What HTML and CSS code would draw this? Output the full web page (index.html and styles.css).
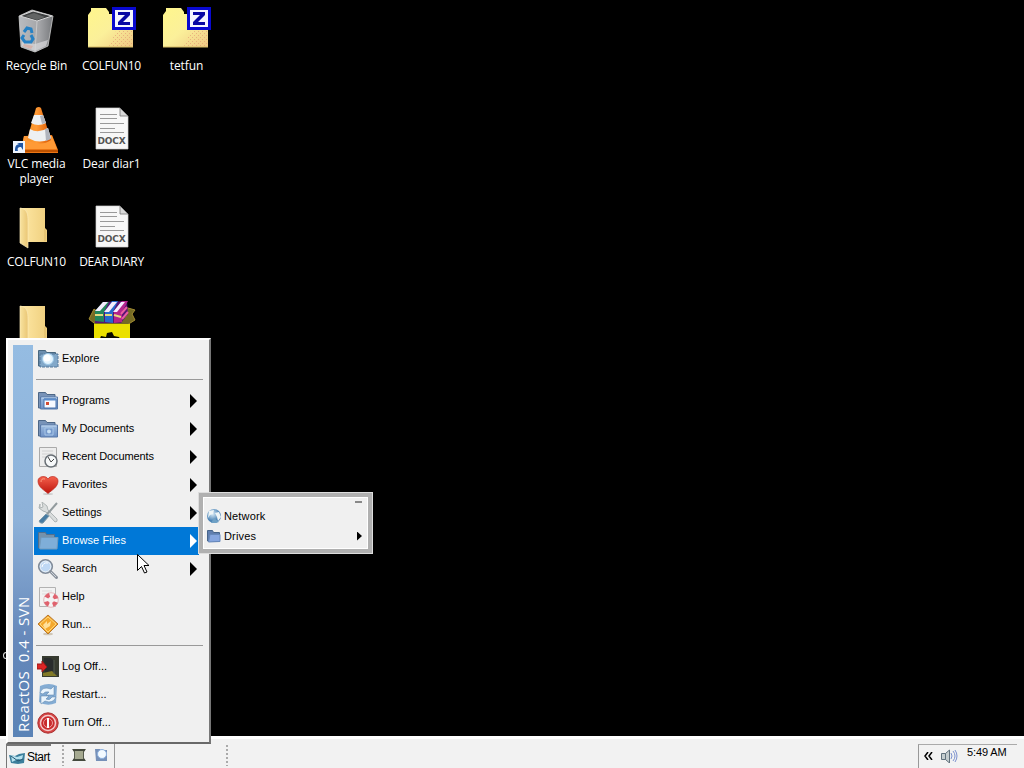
FILE: index.html
```html
<!DOCTYPE html>
<html lang="en">
<head>
<meta charset="utf-8">
<title>Desktop</title>
<link rel="stylesheet" href="styles.css">
</head>
<body>
<svg class="defs" width="0" height="0">
  <defs>
    <linearGradient id="paper" x2="1"><stop stop-color="#f8e3a0"/><stop offset="1" stop-color="#eac674"/></linearGradient>
    <linearGradient id="front" x2="1"><stop stop-color="#ffe9a6"/><stop offset="1" stop-color="#efcf7e"/></linearGradient>
    <linearGradient id="zip" x2="1" y2="1"><stop stop-color="#fff68c"/><stop offset=".5" stop-color="#fbf09a"/><stop offset="1" stop-color="#efc884"/></linearGradient>
    <linearGradient id="cone" x2="1"><stop stop-color="#f79226"/><stop offset=".4" stop-color="#ff9a35"/><stop offset="1" stop-color="#d95500"/></linearGradient>
    <linearGradient id="bin" x2="1"><stop stop-color="#b9bcc0"/><stop offset=".6" stop-color="#a4a5a8"/><stop offset="1" stop-color="#77797c"/></linearGradient>
    <linearGradient id="blue" y2="1" x2="0"><stop stop-color="#9dbce0"/><stop offset="1" stop-color="#6c8fc4"/></linearGradient>
    <linearGradient id="heart" y2="1" x2="0"><stop stop-color="#f4604c"/><stop offset="1" stop-color="#bd150d"/></linearGradient>
    <radialGradient id="globe" cx=".4" cy=".35"><stop stop-color="#d9ecf7"/><stop offset="1" stop-color="#4b83b5"/></radialGradient>
    <pattern id="grain" width="4" height="4" patternUnits="userSpaceOnUse"><path d="M0 0h1v1H0zM2 2h1v1H2z" fill="#e39a74"/></pattern>
    <symbol id="zfolder" viewBox="0 0 50 44">
      <path d="M1 40V8l3-4V1h15l3 4v2h24v33z" fill="url(#zip)"/>
      <path d="M22 39 30 22h15v17z" fill="url(#grain)" opacity=".65"/>
      <path d="M1 40h45" stroke="#d5bb64"/>
      <path d="M25 0h24v23H25z" fill="#0909d0"/><path d="M28 3h18v17H28z" fill="#f4f5ff"/>
      <path d="M31 5h12v3l-7 7h7v3H31v-3l7-7h-7z" fill="#0808a4"/>
    </symbol>
    <symbol id="docx" viewBox="0 0 34 44">
      <path d="M1 1h24l8 8v33H1z" fill="#f7f7f7" stroke="#d0d0d0" stroke-width=".7"/>
      <path d="M25 1v8h8z" fill="#d9d9d9" stroke="#777" stroke-width=".8"/>
      <path d="M5 7.500h17M5 11.500h17M5 16.500h24M5 21.500h15M5 25.500h24" stroke="#999" stroke-width="1"/>
    </symbol>
    <symbol id="folder" viewBox="0 0 30 42">
      <path d="M1 1h25v20l2 2v12H5z" fill="url(#front)"/>
      <path d="M1 1c7 1 8 5 8 14v26l-8-5z" fill="url(#paper)" stroke="#fbeab8" stroke-width=".7"/>
      <path d="M26 22v12" stroke="#ddb966"/>
    </symbol>
    <symbol id="bluefolder" viewBox="0 0 22 22">
      <path d="M1.500 18V2.500h7l1.500 2h8V18z" fill="#7893b8" stroke="#4d6787"/>
      <path d="M3.500 7h17v12h-17z" fill="url(#blue)" stroke="#5878a8"/>
      <path d="M4.500 8h15" stroke="#c2d7ef"/>
    </symbol>
  </defs>
</svg>

<main class="desktop">
  <div class="shortcut"><div class="picture bin">
    <svg width="44" height="46" viewBox="0 0 44 46"><path d="m4 7 13-6 21 6-5 30-13 6-14-5z" fill="url(#bin)" stroke="#d1d1d1" stroke-width=".8"/><path d="m5 7 13-5 19 5-15 5z" fill="#3d3f40" stroke="#d5d5d5"/><path d="m10 7 9-3 11 4-8 3z" fill="#626464"/><path d="M22 12 20 43" stroke="#d5d5d5" stroke-width=".7"/><path d="m7 33 13 2 13-4-2 6-11 5-13-5z" fill="#d8d9dc" opacity=".7"/><path d="m9 35 9 2-2 3-8-3z" fill="#dd9988" opacity=".5"/><path d="m9 23 3-4 4 1 1 4M9 26l-2 3 3 4h3m3-7 2 4-2 3h-3" stroke="#2681c4" stroke-width="3" fill="none"/></svg>
  </div><span class="caption">Recycle Bin</span></div>
  <div class="shortcut"><div class="picture"><svg width="50" height="44"><use href="#zfolder"/></svg></div><span class="caption wide">COLFUN10</span></div>
  <div class="shortcut"><div class="picture"><svg width="50" height="44"><use href="#zfolder"/></svg></div><span class="caption">tetfun</span></div>

  <div class="shortcut first"><div class="picture vlc">
    <svg width="48" height="48" viewBox="0 0 48 48"><path d="m11 30 28-1 6 15v3H8z" fill="#ec7614"/><path d="m11 30-3 13h36l-5-13z" fill="#ff9a36"/><path d="M23 2q3-2 5 0l10 32q-10 7-24 0z" fill="url(#cone)"/><path d="m21 9h9l3 8q-8 4-15 0zM17 23q8 5 18-1l3 10q-11 7-23 0z" fill="#edf0f2"/><path d="m30 9 3 8-4 1-2-8zM32 23l3-1 3 11-5 2z" fill="#afb4bd"/><path d="M8 45h37" stroke="#bd5200" stroke-width="2"/><path d="M0 35h12v12H0z" fill="#eef4fd"/><path d="M2 45c0-5 1-6 4-7L4 37h6v7l-2-3c-3 0-4 1-3 4z" fill="#2157a4"/></svg>
  </div><span class="caption">VLC media player</span></div>
  <div class="shortcut"><div class="picture docx"><svg width="34" height="44"><use href="#docx"/></svg><span class="format">DOCX</span></div><span class="caption">Dear diar1</span></div>

  <div class="shortcut first"><div class="picture folder"><svg width="30" height="42"><use href="#folder"/></svg></div><span class="caption wide">COLFUN10</span></div>
  <div class="shortcut"><div class="picture docx"><svg width="34" height="44"><use href="#docx"/></svg><span class="format">DOCX</span></div><span class="caption wide">DEAR DIARY</span></div>

  <div class="shortcut first"><div class="picture folder"><svg width="30" height="42"><use href="#folder"/></svg></div></div>
  <div class="shortcut"><div class="picture archive">
    <svg width="48" height="44" viewBox="0 0 48 44"><path d="m1 19 5-10 7 5-4 4 29-1 2-9 7 2-3 4 3 6-8 5-28 2z" fill="#756b24" stroke="#a28b32"/><path d="M6 24h36v20H6z" fill="#ebe000"/><path d="m11 41 2-5 5 1 1-4 5-1 2 4 5 1 2 4v3H11z" fill="#090900"/><path d="m7 12 8-10 24-1 1 13-7 9H7z" fill="#591475"/><path d="M7 11 15 2h6l-5 10v10l-9-1z" fill="#23875c"/><path d="M17 12 24 1h6l-5 11v11l-8-1z" fill="#2669cd"/><path d="M26 12 34 1h6l-6 11v10l-8 1z" fill="#b4248b"/><path d="m7 11 8-9h5l-8 9m4 1 8-10h5l-8 10m4 0 8-10h4l-8 10" fill="#f4edff"/><path d="M7 15h8m2 0h7m2 0 7 2" stroke="#e5d97e" stroke-width="2"/><path d="m33 14 6-7M34 19l6-7" stroke="#eb5ca0" stroke-width="2"/></svg>
  </div></div>
</main>
<i class="peek"></i>

<nav class="start-menu">
  <div class="brand"><span>ReactOS&nbsp; 0.4 - SVN</span></div>
  <div class="entries">
    <div class="entry"><svg class="icon" viewBox="0 0 22 22"><path d="M1.500 18V2.500h7l1 2h9V18z" fill="#6c8eae" stroke="#48677f"/><path d="M3 6h18v13H3z" fill="#82a8c9" stroke="#54799b" stroke-dasharray="3 1"/><circle cx="11" cy="11" r="5.500" fill="#e4f5ff" stroke="#a0cae9"/><circle cx="10" cy="10" r="3.500" fill="#fff"/></svg><span>Explore</span></div>
    <hr>
    <div class="entry"><svg class="icon" viewBox="0 0 22 22"><use href="#bluefolder"/><path d="M7 9h12v9H7z" fill="#f7f9ff" stroke="#4670aa"/><path d="M7 9.500h12" stroke="#5b8ccb" stroke-width="2"/><path d="M9 12h3v3H9z" fill="#d34b32"/></svg><span>Programs</span><b class="arrow"></b></div>
    <div class="entry"><svg class="icon" viewBox="0 0 22 22"><use href="#bluefolder"/><path d="M8 10h8v7H8z" fill="#7598cb" stroke="#a9c7e8"/><circle cx="12" cy="13.500" r="2" fill="#c7e0f5"/></svg><span class="tight">My Documents</span><b class="arrow"></b></div>
    <div class="entry"><svg class="icon" viewBox="0 0 22 22"><path d="M2.500 1.500h17v19h-17z" fill="#ededed" stroke="#aaa"/><path d="M5 5h11M5 8h11M5 11h5" stroke="#d1d1d1"/><circle cx="14" cy="15" r="6" fill="#f7f9fa" stroke="#686f75" stroke-width="1.500"/><path d="m11 11 3 5 3-3" stroke="#444" fill="none"/></svg><span class="tight">Recent Documents</span><b class="arrow"></b></div>
    <div class="entry"><svg class="icon" viewBox="0 0 22 22"><ellipse cx="11" cy="20" rx="5" ry="1" fill="#ccc"/><path d="M11 19.500C7 16 1 13 1 7c0-5 8-6 10-2 2-4 10-3 10 2 0 6-6 9-10 12.500z" fill="url(#heart)" stroke="#bd2b21" stroke-width=".7"/><path d="M4 8q0-4 4-3" stroke="#ff9c80" fill="none"/></svg><span>Favorites</span><b class="arrow"></b></div>
    <div class="entry"><svg class="icon" viewBox="0 0 22 22"><path d="M3 2 2 6l4 3 3 1 9 10q3 0 2-3l-9-9-1-4-5-4 1 5-3 1z" fill="#dadddd" stroke="#aeb4b5"/><path d="m20 1-7 8-3 3" stroke="#929b9e" stroke-width="2"/><path d="m9 12 3 2-6 7q-3 1-4-2z" fill="#487ca3" stroke="#7998aa"/></svg><span>Settings</span><b class="arrow"></b></div>
    <div class="entry selected"><svg class="icon" viewBox="0 0 22 22"><path d="M1.500 18V2.500h7l1 2h8V8" fill="#7592ac" stroke="#536f8c"/><path d="M2.500 18 4 7.500h17L20 19H3z" fill="#7faed8" stroke="#719abc"/></svg><span>Browse Files</span><b class="arrow"></b></div>
    <div class="entry"><svg class="icon" viewBox="0 0 22 22"><circle cx="8.500" cy="8.500" r="6.800" fill="#bfd8f4" stroke="#818b98" stroke-width="1.600"/><circle cx="8.500" cy="8.500" r="5.300" fill="none" stroke="#e9f0f5"/><path d="M5 9q1-5 6-4" stroke="#fff" fill="none"/><path d="m13.500 13.500 6 6" stroke="#8a919b" stroke-width="3" stroke-linecap="round"/><path d="m14 14 5 5" stroke="#ced4da"/></svg><span>Search</span><b class="arrow"></b></div>
    <div class="entry"><svg class="icon" viewBox="0 0 22 22"><path d="M2.500 1.500h16v19h-16z" fill="#f2f2f2" stroke="#b2b2b2"/><path d="M5 5h10M5 8h8" stroke="#ddd"/><circle cx="14" cy="14" r="5.300" fill="none" stroke="#f4f4f4" stroke-width="4"/><circle cx="14" cy="14" r="5.300" fill="none" stroke="#e0616d" stroke-width="4.500" stroke-dasharray="4.160" stroke-dashoffset="-2.080"/><circle cx="14" cy="14" r="7.300" fill="none" stroke="#da9398" stroke-width=".6"/></svg><span>Help</span></div>
    <div class="entry"><svg class="icon" viewBox="0 0 22 22"><ellipse cx="11" cy="20" rx="5" ry="1.300" fill="#cfc6b6"/><path d="m11 1 10 9-10 10L1 10z" fill="#f4a82d" stroke="#b8772c"/><path d="m11 3 8 7-8 8-8-8z" fill="none" stroke="#ffd779"/><path d="m6 11 4-4v3l4-3-1 5-5 3" fill="#ffe09a"/></svg><span>Run...</span></div>
    <hr>
    <div class="entry"><svg class="icon" viewBox="0 0 22 22"><path d="M5 0h17v21H5z" fill="#373b30"/><path d="M7 2h7l3 3v13l-9 1z" fill="#292c2c"/><path d="M6 20v-3l9-2 5 5z" fill="#817926"/><path d="M17 4v14" stroke="#555c50"/><path d="M0 8h5V5l5 6-5 5v-3H0z" fill="#dc2525" stroke="#991818"/></svg><span>Log Off...</span></div>
    <div class="entry"><svg class="icon" viewBox="0 0 22 22"><path d="M3 2q9-4 17 0l-1 17q-9 4-17-1z" fill="#84acd3"/><path d="M3 9q2-7 11-4l3-3v9H9l3-3q-4-1-6 2zm16 4q-3 7-11 4l-4 3v-8h8l-3 3q4 2 6-2z" fill="#eaf4fc" stroke="#547da5" stroke-width=".5"/></svg><span>Restart...</span></div>
    <div class="entry"><svg class="icon" viewBox="0 0 22 22"><circle cx="11" cy="11" r="10.200" fill="#d64545" stroke="#aa3030"/><circle cx="11" cy="11" r="7.500" fill="#c82b2d" stroke="#f4cccc" stroke-width="1.500"/><circle cx="11" cy="11" r="4.500" fill="none" stroke="#ef9a9a"/><path d="M11 6v10" stroke="#fff" stroke-width="2"/></svg><span>Turn Off...</span></div>
  </div>
</nav>

<div class="submenu">
  <div class="sub-entry"><svg class="small-icon" viewBox="0 0 16 16"><circle cx="8" cy="8" r="7" fill="url(#globe)"/><path d="m3 3 5-1-1 4-3 1-2 3zM9 5l4-1 2 5-3 4-1-4z" fill="#eef5f7"/><path d="m5 15 3-5 5 4-3 1z" fill="#6fa1c5"/></svg><span>Network</span></div>
  <div class="sub-entry"><svg class="small-icon" viewBox="0 0 16 16"><path d="M1.500 13V2.500h5l1 2h6v9z" fill="#607eae" stroke="#47658b"/><path d="M2.500 14 4 6.500h10v7z" fill="#86a6df" stroke="#6688ba"/></svg><span>Drives</span><b class="arrow"></b></div>
  <i class="grip"></i>
</div>

<svg class="cursor" width="13" height="21" viewBox="0 0 13 21"><path d="M1.500 1.500v16l4-4 3 6.500 2.500-1-3-6.500h5z" fill="#fff" stroke="#000"/></svg>

<footer class="taskbar">
  <div class="start"><svg width="17" height="12" viewBox="0 0 17 12"><path d="m0 3 6 1 4-2 6-1-1 10-6 1-7-1z" fill="#3c7f9c"/><path d="m2 3 6 2 6-2-1 5-4-1-6 3z" fill="#b6e2ef"/><path d="m2 4 7 5 5-2" stroke="#285672" fill="none"/></svg><span>Start</span></div>
  <i class="dots"></i>
  <div class="quick">
    <svg width="14" height="12" viewBox="0 0 14 12"><path d="M0 0h14l-2 3v6l2 3H0l2-3V3z" fill="#555a4c"/><path d="M3 2h8v8H3z" fill="#a5a990"/><path d="M1 1h12M1 11h12" stroke="#34382e"/></svg>
    <svg width="13" height="13" viewBox="0 0 13 13"><path d="M0 1h5l1 1h6v11H1z" fill="#7690b8"/><circle cx="7" cy="6" r="4.500" fill="#f3faff" stroke="#8cb0df"/></svg>
  </div>
  <i class="dots second"></i>
  <div class="tray"><svg width="9" height="8" viewBox="0 0 9 8"><path d="M4 0 1 4l3 4M8 0 5 4l3 4" fill="none" stroke="#000" stroke-width="1.500"/></svg><svg class="speaker" width="17" height="14" viewBox="0 0 17 14"><path d="M.5 4.500h4v6h-4zM4.500 4.500l4-3.500v13l-4-3.500" fill="#c5cdcf" stroke="#61717c"/><path d="M10 4q2 3 0 6m2-8q4 5 0 10m2-11q4 6 0 12" fill="none" stroke="#7c91cf"/></svg><time>5:49 AM</time></div>
</footer>
</body>
</html>
```

FILE: styles.css
```css
* { box-sizing: border-box; }
body {
  margin: 0;
  width: 1024px;
  height: 768px;
  overflow: hidden;
  display: flex;
  flex-direction: column;
  position: relative;
  background: #000;
  font-family: "Liberation Sans", Arial, sans-serif;
}
svg { display: block; flex: none; }
.defs { position: absolute; }
.desktop {
  flex: 1;
  min-height: 0;
  display: grid;
  grid-template-columns: repeat(3, 75px);
  grid-auto-rows: 98px;
  padding-top: 7px;
  margin-left: -1px;
}
.shortcut { display: flex; flex-direction: column; align-items: center; }
.shortcut.first { grid-column: 1; }
.picture { height: 51px; display: flex; flex: none; position: relative; }
.bin { padding-top: 2px; }
.vlc { padding-top: 1px; }
.docx { padding-top: 2px; }
.folder { padding: 4px 5px 0 0; }
.archive { margin-top: -1px; }
.format {
  position: absolute;
  left: 3px;
  top: 31px;
  width: 28px;
  text-align: center;
  font: bold 9px/11px "DejaVu Sans", sans-serif;
  letter-spacing: -.2px;
  color: #555;
}
.caption {
  width: 75px;
  text-align: center;
  color: #fff;
  font: 12px/15px "Open Sans", "Noto Sans", sans-serif;
  letter-spacing: -.1px;
}
.wide { letter-spacing: -.25px; }
.peek { position: absolute; left: 3px; top: 652px; width: 6px; height: 7px; border: 1px solid #ddd; border-radius: 50%; }
.start-menu {
  position: absolute;
  left: 6px;
  top: 338px;
  width: 205px;
  height: 406px;
  padding: 4px 5px;
  display: flex;
  background: #f0f0f0;
  border: 2px solid #fff;
  border-right-color: #777;
  border-bottom-color: #696969;
}
.brand {
  width: 20px;
  height: 392px;
  margin-top: 1px;
  background: linear-gradient(#95bce2, #8db1d8 45%, #6688ba 75%, #5a83b6);
  display: flex;
  justify-content: center;
}
.brand span {
  writing-mode: vertical-rl;
  transform: rotate(180deg);
  font: 15px/20px "Open Sans", sans-serif;
  color: #fff;
  padding-top: 5px;
  white-space: nowrap;
  letter-spacing: .4px;
}
.entries { flex: 1; padding: 1px 0 0 1px; }
.entry {
  display: flex;
  align-items: center;
  height: 28px;
  width: 165px;
  padding: 0 2px 0 3px;
  font-size: 11px;
  letter-spacing: 0;
  color: #000;
}
.entry span { margin: 0 0 2px 3px; }
.entry .tight { letter-spacing: -.1px; }
.selected { background: #0078d7; color: #fff; letter-spacing: .1px; }
.icon { width: 22px; height: 22px; }
.arrow {
  margin-left: auto;
  width: 7px;
  height: 14px;
  background: currentColor;
  clip-path: polygon(0 0, 100% 50%, 0 100%);
}
hr { margin: 6px 0 7px 2px; width: 167px; height: 1px; border: 0; background: #999; }
.submenu {
  position: absolute;
  left: 198px;
  top: 492px;
  width: 175px;
  height: 62px;
  padding: 9px 6px 0 2px;
  background: #f0f0f0;
  border: 5px solid #b0b0b0;
  box-shadow: inset 0 0 0 1px #fff;
  outline: 1px solid #ddd;
  outline-offset: -1px;
}
.sub-entry { height: 20px; display: flex; align-items: center; padding-left: 1px; font-size: 11px; letter-spacing: .15px; }
.sub-entry span { margin-left: 2px; }
.small-icon { width: 16px; height: 16px; }
.sub-entry .arrow { width: 5px; height: 9px; }
.grip { position: absolute; right: 6px; top: 4px; width: 7px; height: 2px; background: #888; }
.cursor { position: absolute; left: 136px; top: 553px; }
.taskbar {
  height: 32px;
  flex: none;
  display: flex;
  align-items: flex-end;
  padding-left: 6px;
  padding-right: 7px;
  background: #f2f2f2;
  border-top: 3px solid #fff;
}
.start {
  display: flex;
  align-items: center;
  width: 45px;
  height: 24px;
  padding: 0 0 1px 2px;
  border-top: 2px solid #777;
  border-left: 1px solid #777;
  font-size: 12px;
  letter-spacing: -.5px;
}
.start svg { margin-top: 2px; }
.start span { margin-left: 1px; }
.dots { width: 2px; height: 21px; margin: 0 0 2px 11px; background: repeating-linear-gradient(#aaa 0 2px, transparent 2px 4px); }
.quick { width: 51px; height: 24px; padding: 5px 0 0 8px; display: flex; gap: 9px; border-right: 1px solid #999; }
.quick svg:last-child { margin-top: -1px; }
.second { margin-left: 111px; }
.tray {
  width: 99px;
  height: 24px;
  margin-left: auto;
  padding: 0 0 0 5px;
  display: flex;
  align-items: center;
  border-left: 1px solid #999;
  border-top: 1px solid #aaa;
  font-size: 11px;
}
.tray svg { margin-top: -2px; }
.tray .speaker { margin-left: 8px; }
time { margin: -10px 0 0 9px; letter-spacing: -.1px; }
```
